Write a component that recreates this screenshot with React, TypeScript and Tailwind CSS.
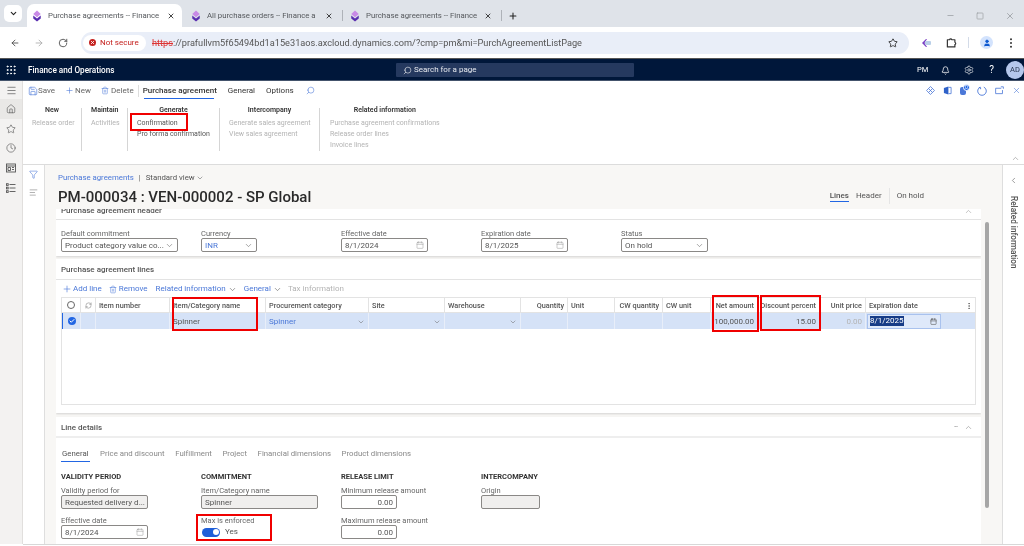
import { ArrowLeft, ArrowRight, Bell, Calendar, Check, ChevronDown, ChevronLeft, ChevronUp, Clock, EllipsisVertical, Filter, Home, Minus, Plus, RefreshCw, RotateCw, Save, Search, Settings, Square, Star, Trash2, User, X, AlignLeft, Grip, Menu } from 'lucide-react';

const columns = [
  { label: 'Item number', w: 'w-[74px]' },
  { label: 'Item/Category name', w: 'w-[96px]', value: 'Spinner' },
  { label: 'Procurement category', w: 'w-[103px]', value: 'Spinner', blue: true, select: true },
  { label: 'Site', w: 'w-[76px]', select: true },
  { label: 'Warehouse', w: 'w-[76px]', select: true },
  { label: 'Quantity', w: 'w-[47px]', right: true },
  { label: 'Unit', w: 'w-[47px]' },
  { label: 'CW quantity', w: 'w-[48px]', right: true },
  { label: 'CW unit', w: 'w-[48px]' },
  { label: 'Net amount', w: 'w-[47px]', right: true, value: '100,000.00' },
  { label: 'Discount percent', w: 'w-[62px]', right: true, value: '15.00' },
  { label: 'Unit price', w: 'w-[46px]', right: true, value: '0.00', faint: true },
];

function Favicon() {
  return (
    <svg viewBox="0 0 12 14" className="w-[10px] h-[12px] shrink-0">
      <path d="M6 0.5l4.5 4-4.5 4-4.5-4z" fill="#c98ae6" />
      <path d="M1.5 6.5l4.5 3.5 4.5-3.5v3.5l-4.5 3.5-4.5-3.5z" fill="#5a2fb0" />
    </svg>
  );
}

function Tab({ title, active, width }: { title: string; active?: boolean; width: string }) {
  return (
    <div className={`flex items-center h-[23px] pl-[5px] pr-[7px] gap-[6px] ${width} ${active ? 'bg-white rounded-t-[7px]' : ''}`}>
      <Favicon />
      <span className="flex-1 whitespace-nowrap text-[7.8px] text-[#55585c]">{title}</span>
      <X className="w-[8px] h-[8px] text-[#222]" strokeWidth={2.5} />
    </div>
  );
}

function Group({ title, items, w, align }: { title: string; items: string[]; w: string; align?: string }) {
  return (
    <div className={`${w} h-[43px] border-r border-[#d5d5d5] pl-[9px] shrink-0`}>
      <div className={`-mt-[2px] text-[7px] font-semibold text-[#333] leading-[9px] ${align ?? 'text-center pr-[9px]'}`}>{title}</div>
      <div className="mt-[3px] flex flex-col">
        {items.map(i => (
          <span key={i} className={`text-[7px] leading-[11px] whitespace-nowrap ${i === 'Confirmation' || i === 'Pro forma confirmation' ? 'text-[#555]' : 'text-[#b3b3b3]'}`}>{i}</span>
        ))}
      </div>
    </div>
  );
}

function Field({ label, value, w, kind, disabled, right, blue }: { label: string; value: string; w: string; kind?: 'select' | 'date'; disabled?: boolean; right?: boolean; blue?: boolean }) {
  return (
    <div className="flex flex-col">
      <span className="text-[7.5px] leading-[9px] text-[#666] whitespace-nowrap">{label}</span>
      <div className={`${w} h-[14px] border border-[#8a8886] rounded-[2px] flex items-center px-[3px] ${disabled ? 'bg-[#f0efee]' : 'bg-white'}`}>
        <span className={`flex-1 pt-[1px] whitespace-nowrap text-[8px] ${right ? 'text-right' : ''} ${blue ? 'text-[#4b78d8]' : 'text-[#555]'}`}>{value}</span>
        {kind === 'select' && <ChevronDown className="w-[9px] h-[9px] text-[#666]" strokeWidth={1.5} />}
        {kind === 'date' && <Calendar className="w-[8px] h-[8px] text-[#999]" strokeWidth={1.5} />}
      </div>
    </div>
  );
}

function RedBox({ pos }: { pos: string }) {
  return <div className={`absolute border-2 border-[#f00000] ${pos}`} />;
}

function ActionIcons() {
  return (
    <div className="ml-auto flex items-center gap-[8px] pr-[3px] text-[#4b78d8]">
      <svg viewBox="0 0 10 10" className="w-[9px] h-[9px]" fill="none" stroke="currentColor" strokeWidth="0.9">
        <path d="M5 .6L9.4 5 5 9.4.6 5z" />
        <path d="M3 3l4 4M7 3L3 7" />
      </svg>
      <svg viewBox="0 0 10 10" className="w-[9px] h-[9px]" fill="none">
        <path d="M1 2.2L6 .5v9L1 7.8z" fill="#2f62c9" />
        <path d="M6 1.5h3v7H6" stroke="currentColor" strokeWidth="0.9" />
      </svg>
      <div className="relative w-[9px] h-[9px]">
        <div className="absolute left-0 top-[1px] w-[6px] h-[8px] rounded-[2px] bg-[#4b78d8]" />
        <div className="absolute -top-[2px] left-[3px] w-[7px] h-[7px] rounded-full bg-[#2266e3] border border-white text-white text-[5px] leading-[5px] text-center">0</div>
      </div>
      <svg viewBox="0 0 10 10" className="w-[10px] h-[10px]" fill="none" stroke="currentColor" strokeWidth="0.9">
        <path d="M3.2 1.1A4.3 4.3 0 1 0 6.8 1.1M1.9 1.6h1.7v1.6" />
      </svg>
      <svg viewBox="0 0 10 10" className="w-[9px] h-[9px]" fill="none" stroke="currentColor" strokeWidth="0.9">
        <path d="M7 2.5H.7v6h7.6V4.5M6.5.9h2.8v2.2" />
      </svg>
      <X className="w-[9px] h-[9px]" strokeWidth={1.5} />
    </div>
  );
}

export default function App() {
  return (
    <div className="relative w-[1024px] h-[546px] overflow-hidden bg-white font-['Roboto',sans-serif] [font-variant-ligatures:none] flex flex-col blur-[0.35px]">
      {/* browser chrome */}
      <div className="h-[27px] bg-[#dfe3e9] flex items-end pl-[4px] shrink-0">
        <div className="mb-[5px] w-[18px] h-[17px] bg-white rounded-[5px] flex items-center justify-center mr-[5px]">
          <ChevronDown className="w-[9px] h-[9px] text-[#222]" strokeWidth={3} />
        </div>
        <Tab title="Purchase agreements -- Finance" active width="w-[155px]" />
        <div className="flex items-center ml-[4px]">
          <Tab title="All purchase orders -- Finance a" width="w-[154px]" />
          <div className="w-px h-[11px] bg-[#aeb2b8] ml-[2px]" />
          <div className="ml-[2px]">
            <Tab title="Purchase agreements -- Finance" width="w-[154px]" />
          </div>
          <div className="w-px h-[11px] bg-[#aeb2b8] ml-[2px]" />
          <Plus className="w-[10px] h-[10px] text-[#222] ml-[6px]" strokeWidth={2.5} />
        </div>
        <div className="flex-1 flex items-center justify-end h-[23px] gap-[21px] pr-[9px] text-[#9a9da2]">
          <Minus className="w-[9px] h-[9px]" />
          <Square className="w-[8px] h-[8px]" />
          <X className="w-[10px] h-[10px]" />
        </div>
      </div>
      <div className="h-[32px] flex items-center pl-[10px] shrink-0 border-b border-[#555]">
        <ArrowLeft className="w-[10px] h-[10px] text-[#444]" strokeWidth={2} />
        <ArrowRight className="w-[10px] h-[10px] text-[#aaa] ml-[14px]" strokeWidth={2} />
        <RotateCw className="w-[10px] h-[10px] text-[#444] ml-[14px]" strokeWidth={2} />
        <div className="ml-[13px] w-[828px] h-[22px] rounded-full bg-[#e9eef8] flex items-center pl-[2px] pr-[11px]">
          <div className="h-[16px] w-[63px] bg-white rounded-full flex items-center pl-[6px] gap-[4px]">
            <div className="w-[7px] h-[7px] rounded-full bg-[#c5221f] flex items-center justify-center">
              <X className="w-[5px] h-[5px] text-white" strokeWidth={4} />
            </div>
            <span className="text-[8px] text-[#c5221f] whitespace-nowrap">Not secure</span>
          </div>
          <span className="ml-[6px] flex-1 text-[9.2px] text-[#555] whitespace-nowrap">
            <span className="line-through text-[#d33]">https</span>://prafullvm5f65494bd1a15e31aos.axcloud.dynamics.com/?cmp=pm&amp;mi=PurchAgreementListPage
          </span>
          <Star className="w-[10px] h-[10px] text-[#222]" strokeWidth={2} />
        </div>
        <svg viewBox="0 0 10 10" className="ml-[12px] w-[10px] h-[10px]">
          <path d="M5 1L1 5l4 4h1L3.5 5 6 1z" fill="#7a3fc4" />
          <rect x="4" y="3" width="6" height="4" rx="1" fill="#b9cfe8" />
        </svg>
        <svg viewBox="0 0 12 12" className="ml-[15px] w-[11px] h-[11px]" fill="none" stroke="#333" strokeWidth="1.3">
          <path d="M1.5 3h2.3a1.4 1.4 0 0 1 2.6 0h3.3v2.7a1.4 1.4 0 0 1 0 2.6v2.5H1.5z" strokeLinejoin="round" />
        </svg>
        <div className="ml-[11px] w-px h-[11px] bg-[#d3dbe8]" />
        <div className="ml-[11px] w-[13px] h-[13px] rounded-full bg-[#d3e3fd] flex items-center justify-center">
          <User className="w-[8px] h-[8px] text-[#0b57d0] fill-[#0b57d0]" />
        </div>
        <svg viewBox="0 0 4 12" className="ml-[16px] w-[4px] h-[10px]" fill="#333">
          <circle cx="2" cy="1.5" r="1.2" /><circle cx="2" cy="6" r="1.2" /><circle cx="2" cy="10.5" r="1.2" />
        </svg>
      </div>
      {/* app nav */}
      <div className="h-[22px] bg-[#00173a] flex items-center pt-[1px] shrink-0 border-b border-[#44546c]">
        <Grip className="ml-[5px] w-[12px] h-[12px] text-white" strokeWidth={2} />
        <span className="ml-[11px] w-[368px] text-[8.2px] font-medium text-white whitespace-nowrap">Finance and Operations</span>
        <div className="w-[238px] h-[14px] bg-[#25395f] rounded-[1px] flex items-center pl-[7px] gap-[2px] text-white">
          <Search className="w-[9px] h-[9px] -scale-x-100" strokeWidth={1.5} />
          <span className="text-[8px] text-[#e6e9ef]">Search for a page</span>
        </div>
        <span className="ml-[283px] text-[7.5px] text-white">PM</span>
        <Bell className="ml-[13px] w-[9px] h-[9px] text-white" strokeWidth={2} />
        <Settings className="ml-[14px] w-[10px] h-[10px] text-white" strokeWidth={1.5} />
        <span className="ml-[15px] text-[10px] leading-none text-white">?</span>
        <div className="ml-[12px] w-[18px] h-[18px] rounded-full bg-[#b4c7ec] flex items-center justify-center text-[7.5px] text-[#27364f]">AD</div>
      </div>
      <div className="flex-1 flex min-h-0">
        {/* left rail */}
        <div className="w-[23px] shrink-0 bg-[#f3f2f1] border-r border-[#e1dfdd] flex flex-col items-center text-[#555] mb-[2px]">
          <Menu className="mt-[4px] w-[11px] h-[11px]" strokeWidth={1.5} />
          <div className="mt-[3px] w-full h-[20px] bg-[#e9e8e6] flex items-center justify-center">
            <Home className="w-[10px] h-[10px]" strokeWidth={1.5} />
          </div>
          <Star className="mt-[5px] w-[10px] h-[10px]" strokeWidth={1.5} />
          <Clock className="mt-[9px] w-[10px] h-[10px]" strokeWidth={1.5} />
          <svg viewBox="0 0 10 10" className="mt-[10px] w-[10px] h-[10px]" fill="none" stroke="currentColor" strokeWidth="0.9">
            <rect x="0.5" y="1" width="9" height="8" />
            <path d="M0.5 3h9M2 4.5h2.5v3H2zM6 4.5h2M6 6.5h2" />
          </svg>
          <svg viewBox="0 0 10 10" className="mt-[10px] w-[10px] h-[10px]" fill="none" stroke="currentColor" strokeWidth="0.9">
            <path d="M3.5 1.5h6M3.5 5h6M3.5 8.5h6" />
            <rect x="0.5" y="0.7" width="1.7" height="1.7" /><rect x="0.5" y="4.2" width="1.7" height="1.7" /><rect x="0.5" y="7.7" width="1.7" height="1.7" />
          </svg>
        </div>
        <div className="flex-1 flex flex-col min-w-0">
          {/* action pane */}
          <div className="h-[84px] shrink-0 border-b border-[#dcdcdc] relative">
            <div className="h-[19px] flex items-center pl-[5px] text-[8px] text-[#666]">
              <Save className="w-[10px] h-[10px] text-[#4b78d8]" strokeWidth={1.5} />
              <span>Save</span>
              <Plus className="ml-[10px] w-[9px] h-[9px] text-[#4b78d8]" strokeWidth={1.5} />
              <span className="ml-px">New</span>
              <Trash2 className="ml-[10px] w-[8px] h-[9px] text-[#4b78d8]" strokeWidth={1.5} />
              <span className="ml-[2px]">Delete</span>
              <div className="ml-[4px] w-px h-[12px] bg-[#ddd]" />
              <div className="ml-[4px] h-[19px] flex flex-col justify-center relative text-[#333]">
                <span className="font-medium">Purchase agreement</span>
                <div className="absolute left-[1px] right-[3px] bottom-[1px] h-[1px] bg-[#2266e3]" />
              </div>
              <span className="ml-[11px] text-[#333]">General</span>
              <span className="ml-[11px] text-[#333]">Options</span>
              <Search className="ml-[12px] w-[9px] h-[9px] text-[#4b78d8] -scale-x-100" strokeWidth={1.5} />
              <ActionIcons />
            </div>
            <div className="flex mt-[8px]">
              <Group w="w-[59px]" title="New" items={['Release order']} />
              <Group w="w-[46px]" title="Maintain" items={['Activities']} align="pr-0" />
              <Group w="w-[92px]" title="Generate" items={['Confirmation', 'Pro forma confirmation']} />
              <Group w="w-[100px]" title="Intercompany" items={['Generate sales agreement', 'View sales agreement']} />
              <div className="pl-[10px]">
                <div className="-mt-[2px] text-[7px] font-semibold text-[#333] leading-[9px] text-center">Related information</div>
                <div className="mt-[3px] flex flex-col text-[7px] leading-[11px] text-[#b3b3b3] whitespace-nowrap">
                  <span>Purchase agreement confirmations</span>
                  <span>Release order lines</span>
                  <span>Invoice lines</span>
                </div>
              </div>
            </div>
            <ChevronUp className="absolute right-[4px] bottom-[1px] w-[9px] h-[9px] text-[#888]" strokeWidth={1.5} />
          </div>
          <div className="flex-1 flex min-h-0 border-b border-[#d8d8d8] mb-[1px]">
            {/* filter pane */}
            <div className="w-[22px] shrink-0 border-r border-[#dedede] flex flex-col items-center text-[#4b78d8]">
              <Filter className="mt-[5px] w-[9px] h-[9px]" strokeWidth={1.5} />
              <AlignLeft className="mt-[9px] w-[9px] h-[9px] text-[#777]" strokeWidth={1.5} />
            </div>
            {/* content */}
            <div className="flex-1 bg-[#f8f7f5] flex flex-col min-w-0 overflow-hidden">
              <div className="h-[44px] shrink-0 pl-[13px] relative">
                <div className="flex items-center pt-[8px] text-[7.8px] leading-[10px]">
                  <span className="text-[#4b78d8]">Purchase agreements</span>
                  <span className="ml-[5px] text-[#666]">|</span>
                  <span className="ml-[5px] text-[#555]">Standard view</span>
                  <ChevronDown className="ml-px w-[8px] h-[8px] text-[#555]" strokeWidth={1.5} />
                </div>
                <div className="mt-[4px] text-[15px] leading-[20px] font-medium text-[#2a2a2a] whitespace-nowrap">PM-000034 : VEN-000002 - SP Global</div>
                <div className="absolute top-[23px] right-[78px] flex items-center text-[8px] text-[#555]">
                  <span className="border-b border-[#2266e3] leading-[10px] font-medium">Lines</span>
                  <span className="ml-[7px]">Header</span>
                  <div className="ml-[7px] w-px h-[16px] bg-[#e5e5e5]" />
                  <span className="ml-[7px]">On hold</span>
                </div>
              </div>
              <div className="flex-1 flex min-h-0">
                <div className="ml-[11px] w-[925px] flex flex-col gap-[3px] bg-[#f8f7f5] overflow-hidden">
                  {/* header fasttab */}
                  <div className="bg-white shadow-[0_1px_2px_rgba(0,0,0,0.15)] shrink-0">
                    <div className="h-[11px] border-b border-[#e3e3e3] pl-[5px] relative overflow-hidden">
                      <span className="block -mt-[4px] text-[8px] font-medium leading-[12px] text-[#555]">Purchase agreement header</span>
                      <ChevronUp className="absolute right-[8px] -top-[2px] w-[9px] h-[9px] text-[#999]" strokeWidth={1.5} />
                    </div>
                    <div className="h-[36px] pl-[5px] pt-[9px] grid grid-cols-[140px_140px_140px_140px_140px]">
                      <Field label="Default commitment" value="Product category value co..." w="w-[117px]" kind="select" />
                      <Field label="Currency" value="INR" w="w-[56px]" kind="select" blue />
                      <Field label="Effective date" value="8/1/2024" w="w-[87px]" kind="date" />
                      <Field label="Expiration date" value="8/1/2025" w="w-[87px]" kind="date" />
                      <Field label="Status" value="On hold" w="w-[87px]" kind="select" />
                    </div>
                  </div>
                  {/* lines fasttab */}
                  <div className="bg-white shadow-[0_1px_2px_rgba(0,0,0,0.15)] shrink-0">
                    <div className="h-[21px] border-b border-[#e3e3e3] pl-[5px] pt-[2px] flex items-center text-[8px] font-medium text-[#555]">Purchase agreement lines</div>
                    <div className="h-[17px] pl-[6px] pt-[1px] flex items-center text-[8px] text-[#4b78d8]">
                      <Plus className="w-[10px] h-[10px]" strokeWidth={1.5} />
                      <span className="ml-px">Add line</span>
                      <Trash2 className="ml-[7px] w-[8px] h-[9px]" strokeWidth={1.5} />
                      <span className="ml-[2px]">Remove</span>
                      <span className="ml-[8px]">Related information</span>
                      <ChevronDown className="ml-[2px] w-[9px] h-[9px] text-[#555]" strokeWidth={1.5} />
                      <span className="ml-[7px]">General</span>
                      <ChevronDown className="ml-[2px] w-[9px] h-[9px] text-[#555]" strokeWidth={1.5} />
                      <span className="ml-[6px] text-[#b3b3b3]">Tax information</span>
                    </div>
                    <div className="mx-[5px] h-[108px] border border-[#e3e3e3] flex flex-col">
                      <div className="h-[15px] flex items-center border-b border-[#e3e3e3] text-[7.3px] font-medium text-[#555]">
                        <div className="w-[18px] flex justify-center"><div className="w-[8px] h-[8px] rounded-full border border-[#666]" /></div>
                        <div className="w-[16px] flex justify-center border-x border-[#e3e3e3] h-full items-center"><RefreshCw className="w-[7px] h-[7px] text-[#666]" strokeWidth={1.5} /></div>
                        {columns.map(c => (
                          <div key={c.label} className={`${c.w} h-full shrink-0 flex items-center px-[3px] pt-[2px] border-r border-[#e3e3e3] whitespace-nowrap ${c.right ? 'justify-end' : ''}`}>{c.label}</div>
                        ))}
                        <div className="flex-1 h-full flex items-center pl-[3px] pt-[2px] justify-between">
                          <span>Expiration date</span>
                          <EllipsisVertical className="w-[8px] h-[8px] text-[#555] mr-[2px]" />
                        </div>
                      </div>
                      <div className="h-[16px] flex items-center bg-[#d5e2f7] border-l border-[#2266e3] text-[8px] text-[#555]">
                        <div className="w-[17px] flex justify-center">
                          <div className="w-[8px] h-[8px] rounded-full bg-[#2266e3] flex items-center justify-center">
                            <Check className="w-[6px] h-[6px] text-white" strokeWidth={4} />
                          </div>
                        </div>
                        <div className="w-[16px] h-full border-x border-[#e8eef9]" />
                        {columns.map(c => (
                          <div key={c.label} className={`${c.w} h-full shrink-0 flex items-center px-[3px] pt-[1px] border-r border-[#e8eef9] whitespace-nowrap ${c.right ? 'justify-end' : 'justify-between'} ${c.blue ? 'text-[#4b78d8]' : ''} ${c.faint ? 'text-[#b3b3b3]' : ''}`}>
                            {c.value && <span>{c.value}</span>}
                            {c.select && <ChevronDown className="ml-auto w-[8px] h-[8px] text-[#666]" strokeWidth={1.5} />}
                          </div>
                        ))}
                        <div className="ml-[1px] w-[74px] h-[15px] bg-[#dfe9fa] border border-[#a9c2ee] flex items-center pl-[2px] pr-[3px] justify-between">
                          <span className="bg-[#173c87] text-white leading-[10px]">8/1/2025</span>
                          <Calendar className="w-[7px] h-[7px] text-[#555]" strokeWidth={2} />
                        </div>
                      </div>
                    </div>
                    <div className="h-[8px]" />
                  </div>
                  {/* line details fasttab */}
                  <div className="mt-[1px] bg-white shadow-[0_1px_2px_rgba(0,0,0,0.15)] flex-1 min-h-0">
                    <div className="h-[21px] border-b-2 border-[#eeeeee] pl-[5px] pr-[8px] pt-[2px] flex items-center text-[8px] font-medium text-[#555] justify-between">
                      <span>Line details</span>
                      <div className="flex items-center gap-[6px] text-[#888]">
                        <span className="text-[7px] font-normal">--</span>
                        <ChevronUp className="w-[9px] h-[9px]" strokeWidth={1.5} />
                      </div>
                    </div>
                    <div className="h-[24px] pl-[5px] flex gap-[10.6px] text-[7.8px] text-[#888]">
                      <span className="h-[24px] pt-[11px] leading-[10px] border-b border-[#2266e3] text-[#555] px-px">General</span>
                      <span className="h-[24px] pt-[11px] leading-[10px]">Price and discount</span>
                      <span className="h-[24px] pt-[11px] leading-[10px]">Fulfillment</span>
                      <span className="h-[24px] pt-[11px] leading-[10px]">Project</span>
                      <span className="h-[24px] pt-[11px] leading-[10px]">Financial dimensions</span>
                      <span className="h-[24px] pt-[11px] leading-[10px]">Product dimensions</span>
                    </div>
                    <div className="pl-[5px] pt-[10px] grid grid-cols-[140px_140px_140px_140px]">
                      <div className="flex flex-col gap-[7px]">
                        <div>
                          <div className="text-[7.5px] leading-[9px] font-bold text-[#333] mb-[5px]">VALIDITY PERIOD</div>
                          <Field label="Validity period for" value="Requested delivery d..." w="w-[87px]" disabled />
                        </div>
                        <Field label="Effective date" value="8/1/2024" w="w-[87px]" kind="date" />
                      </div>
                      <div className="flex flex-col gap-[7px]">
                        <div>
                          <div className="text-[7.5px] leading-[9px] font-bold text-[#333] mb-[5px]">COMMITMENT</div>
                          <Field label="Item/Category name" value="Spinner" w="w-[117px]" disabled />
                        </div>
                        <div>
                          <span className="block text-[7.5px] leading-[9px] text-[#666]">Max is enforced</span>
                          <div className="mt-[1px] ml-[1px] flex items-center gap-[5px]">
                            <div className="w-[18px] h-[9px] rounded-full bg-[#1f5fd9] flex items-center justify-end pr-[1px]">
                              <div className="w-[6px] h-[6px] rounded-full bg-white" />
                            </div>
                            <span className="text-[8px] text-[#555]">Yes</span>
                          </div>
                        </div>
                      </div>
                      <div className="flex flex-col gap-[7px]">
                        <div>
                          <div className="text-[7.5px] leading-[9px] font-bold text-[#333] mb-[5px]">RELEASE LIMIT</div>
                          <Field label="Minimum release amount" value="0.00" w="w-[56px]" right />
                        </div>
                        <Field label="Maximum release amount" value="0.00" w="w-[56px]" right />
                      </div>
                      <div>
                        <div className="text-[7.5px] leading-[9px] font-bold text-[#333] mb-[5px]">INTERCOMPANY</div>
                        <Field label="Origin" value="" w="w-[59px]" disabled />
                      </div>
                    </div>
                  </div>
                </div>
                <div className="ml-[4px] mt-[13px] w-[4px] h-[286px] rounded-full bg-[#a6a6a6]" />
              </div>
            </div>
            {/* related info pane */}
            <div className="w-[22px] shrink-0 border-l border-[#dedede] flex flex-col items-center text-[#555]">
              <ChevronLeft className="mt-[11px] w-[9px] h-[9px]" strokeWidth={1.5} />
              <span className="mt-[11px] text-[8.2px] font-medium whitespace-nowrap [writing-mode:vertical-rl]">Related information</span>
            </div>
          </div>
        </div>
      </div>
      <RedBox pos="left-[130px] top-[113px] w-[58px] h-[18px]" />
      <RedBox pos="left-[172px] top-[297px] w-[86px] h-[34px]" />
      <RedBox pos="left-[712px] top-[295px] w-[47px] h-[37px]" />
      <RedBox pos="left-[760px] top-[295px] w-[61px] h-[36px]" />
      <RedBox pos="left-[196px] top-[514px] w-[76px] h-[27px]" />
    </div>
  );
}
